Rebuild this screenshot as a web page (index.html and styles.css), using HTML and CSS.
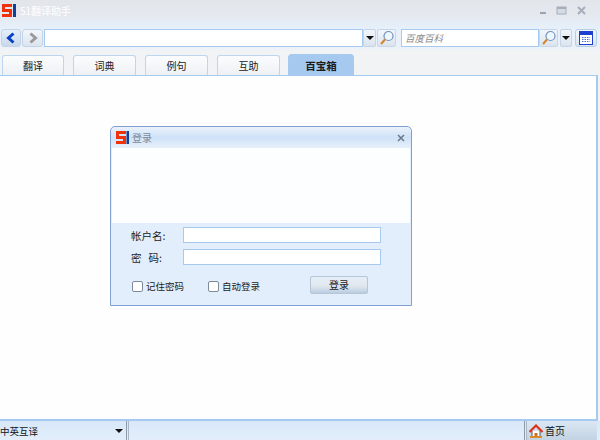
FILE: index.html
```html
<!DOCTYPE html>
<html lang="zh">
<head>
<meta charset="utf-8">
<title>51翻译助手</title>
<link rel="stylesheet" href="styles.css">
</head>
<body>
<div class="app">
  <header class="titlebar">
    <svg class="logo" width="14" height="13" viewBox="0 0 14 13"><path d="M0 0h10v3H3v2h7v8H0v-3h7V8H0z" fill="#f0320c"/><rect x="11" width="3" height="13" fill="#123f9a"/></svg>
    <span class="apptitle">51翻译助手</span>
    <div class="winctl">
      <svg width="60" height="14" viewBox="0 0 60 14"><rect x="0" y="9" width="6" height="2" fill="#9aa5b3"/><rect x="17" y="4" width="9" height="7" fill="#d5dbe3" stroke="#a5aeba"/><rect x="17" y="4" width="9" height="2" fill="#a5aeba"/><path d="M38 4l7 7M45 4l-7 7" stroke="#a5aeba" stroke-width="2"/></svg>
    </div>
  </header>
  <div class="toolbar">
    <button class="navbtn nav-active"><svg width="12" height="12" viewBox="0 0 12 12"><path d="M8.500 1.500L3.500 6l5 4.500" fill="none" stroke="#0a3fc4" stroke-width="3"/></svg></button>
    <button class="navbtn"><svg width="12" height="12" viewBox="0 0 12 12"><path d="M3.500 1.500L8.500 6l-5 4.500" fill="none" stroke="#9a9a9a" stroke-width="3"/></svg></button>
    <div class="field field-main"></div>
    <button class="dropbtn"><i class="caret"></i></button>
    <button class="iconbtn"><svg width="16" height="16" viewBox="0 0 16 16"><circle cx="9.500" cy="6" r="4.500" fill="#eef6ff" stroke="#6f93bb" stroke-width="1.200"/><path d="M6 9.500L2 14" stroke="#d9822b" stroke-width="2"/></svg></button>
    <div class="field field-search"><span class="hint">百度百科</span></div>
    <button class="iconbtn iconbtn-joined"><svg width="16" height="16" viewBox="0 0 16 16"><circle cx="9.500" cy="6" r="4.500" fill="#eef6ff" stroke="#6f93bb" stroke-width="1.200"/><path d="M6 9.500L2 14" stroke="#d9822b" stroke-width="2"/></svg></button>
    <button class="dropbtn dropbtn-gap"><i class="caret"></i></button>
    <button class="calbtn"><svg width="14" height="14" viewBox="0 0 14 14"><rect x=".5" y=".5" width="13" height="13" fill="#fff" stroke="#1c3fd0"/><rect x="1" y="1" width="12" height="3" fill="#1c3fd0"/><path d="M3 6.500h8M3 8.500h8M3 10.500h8" stroke="#4d6fe0" stroke-dasharray="1.500 1"/></svg></button>
  </div>
  <nav class="tabs">
    <span class="tab">翻译</span>
    <span class="tab">词典</span>
    <span class="tab">例句</span>
    <span class="tab">互助</span>
    <span class="tab tab-on">百宝箱</span>
  </nav>
  <main class="content">
    <section class="dialog">
      <div class="dlghead">
        <svg class="dlglogo" width="13" height="13" viewBox="0 0 13 13"><path d="M0 0h10v3H3v2h7v8H0v-3h7V8H0z" fill="#f0320c"/><rect x="10.500" width="2.500" height="13" fill="#123f9a"/></svg>
        <span class="dlgtitle">登录</span>
        <svg class="dlgclose" width="8" height="8" viewBox="0 0 8 8"><path d="M1 1l6 6M7 1L1 7" stroke="#6c7b8b" stroke-width="1.600"/></svg>
      </div>
      <div class="dlgbody"></div>
      <div class="dlgform">
        <div class="row"><label class="lbl">帐户名:</label><div class="txt"></div></div>
        <div class="row"><label class="lbl">密&nbsp;&nbsp;&nbsp;码:</label><div class="txt"></div></div>
        <div class="opts">
          <i class="check"></i><span class="opt opt-a">记住密码</span>
          <i class="check"></i><span class="opt">自动登录</span>
          <button class="login">登录</button>
        </div>
      </div>
    </section>
  </main>
  <footer class="status">
    <div class="lang"><span>中英互译</span><i class="caret"></i></div>
    <div class="mid"></div>
    <div class="home">
      <svg width="14" height="14" viewBox="0 0 14 14"><path d="M3 7v6h8V7" fill="#fff" stroke="#555"/><path d="M.5 8L7 1.500 13.500 8" fill="none" stroke="#e0321a" stroke-width="2.200"/><rect x="5.500" y="9" width="3" height="4" fill="#c9701f"/><rect x="1" y="12" width="12" height="2" fill="#d98a2b"/></svg>
      <span>首页</span>
    </div>
  </footer>
</div>
</body>
</html>
```

FILE: styles.css
```css
* { box-sizing: border-box; }
html, body { margin: 0; padding: 0; }
body { width: 600px; height: 440px; overflow: hidden; font-family: "Noto Sans CJK SC", "Liberation Sans", sans-serif; font-size: 10px; color: #222; }
.app { width: 600px; height: 440px; display: flex; flex-direction: column; background: #f1f3f6; }
.titlebar { height: 28px; flex: none; display: flex; align-items: flex-start; padding: 3px 0 0 2px; background: linear-gradient(#e2e5ea, #e5e9ef 55%, #e6f0fb); }
.logo { flex: none; margin-top: 1px; }
.apptitle { margin-left: 4px; line-height: 15px; font-size: 10px; color: #fff; }
.winctl { margin-left: auto; height: 14px; display: flex; }
.toolbar { height: 23px; flex: none; display: flex; align-items: flex-start; padding: 1px 3px 0 1px; background: linear-gradient(#e6f0fb, #eaf1fa 80%, #f1f3f6); }
.toolbar > * { flex: none; }
button { margin: 0; padding: 0; font: inherit; }
.navbtn { width: 21px; height: 18px; display: flex; align-items: center; justify-content: center; border: 1px solid #c4d4e6; border-radius: 3px; background: linear-gradient(#f2f6fb, #dbe4ee); }
.nav-active { width: 20px; margin-right: 1px; background: linear-gradient(#e6eff9, #c8d8ea); }
.field { height: 18px; border: 1px solid #a6cbee; background: #fff; }
.field-main { width: 319px; margin-left: 1px; }
.dropbtn { width: 13px; height: 18px; display: flex; align-items: center; justify-content: center; border: 1px solid #c4d4e6; border-radius: 2px; background: linear-gradient(#f2f6fb, #dbe4ee); }
.dropbtn-gap { width: 12px; margin-left: 2px; }
.caret { display: block; width: 0; height: 0; border: 4px solid transparent; border-top: 4px solid #111; border-bottom: 0; }
.iconbtn { width: 19px; height: 18px; margin-left: 1px; display: flex; align-items: center; justify-content: center; border: 1px solid #c8d6e6; border-radius: 2px; background: linear-gradient(#f2f6fb, #dbe4ee); }
.iconbtn-joined { margin-left: 0; }
.field-search { width: 138px; margin-left: 5px; padding-left: 3px; line-height: 15px; }
.hint { font-size: 9.500px; font-style: italic; color: #8a8a8a; }
.calbtn { width: 22px; height: 18px; margin-left: 3px; display: flex; align-items: center; justify-content: center; border: 1px solid #b9cde3; border-radius: 3px; background: linear-gradient(#f2f6fb, #d8e4f0); }
.tabs { height: 24px; flex: none; display: flex; align-items: flex-end; padding: 0 0 0 2px; gap: 9px; background: #f1f3f5; }
.tab { width: 62px; height: 20px; display: flex; align-items: center; justify-content: center; font-size: 10px; color: #1a1a1a; border: 1px solid #bcd6ef; border-bottom: 0; border-radius: 3px 3px 0 0; background: linear-gradient(#fbfcfd, #eef1f4); }
.tab + .tab { width: 63px; }
.tab.tab-on { width: 66px; margin-left: -1px; height: 21px; font-size: 10.500px; font-weight: 700; background: #a6c9ef; border-color: #a6c9ef; border-radius: 4px 4px 0 0; }
.content { flex: 1; position: relative; margin-right: 2px; background: #fefefe; border-top: 1px solid #a6c9ef; border-right: 2px solid #a6c9ef; border-bottom: 2px solid #a6c9ef; }
.dialog { position: absolute; left: 110px; top: 50px; width: 302px; height: 180px; display: flex; flex-direction: column; border: 1px solid #7f9fd0; border-top-left-radius: 5px; border-top-right-radius: 5px; background: #e2eefb; }
.dlghead { height: 21px; flex: none; display: flex; align-items: center; padding: 0 6px 0 5px; border-radius: 5px 5px 0 0; background: linear-gradient(#eaf2fb, #cfe2f8 50%, #e6f0fb); }
.dlgtitle { margin-left: 3px; font-size: 10px; color: #7d8a99; }
.dlgclose { margin-left: auto; }
.dlgbody { height: 75px; flex: none; margin: 0 1px; background: #fdfeff; }
.dlgform { flex: 1; padding: 4px 29px 0 20px; }
.row { height: 16px; margin-bottom: 6px; display: flex; align-items: center; }
.lbl { width: 52px; padding-top: 1px; font-size: 10.500px; color: #222; line-height: 16px; white-space: nowrap; }
.txt { width: 198px; height: 16px; border: 1px solid #a6c9ef; background: #fff; }
.opts { display: flex; align-items: flex-start; height: 20px; margin-top: 11px; padding-left: 1px; }
.check { width: 11px; height: 11px; margin-top: 5px; border: 1px solid #7f8a99; border-radius: 2px; background: #fff; }
.opt { margin-left: 3px; line-height: 20px; font-size: 9.500px; color: #222; }
.opt-a { width: 62px; }
.login { width: 58px; height: 18px; margin-left: 50px; font-size: 10px; line-height: 14px; color: #222; border: 1px solid #b5c6d9; border-radius: 2px; background: linear-gradient(#e6eef7, #e0e7ef 55%, #bccde0); }
.status { height: 19px; flex: none; display: flex; background: linear-gradient(#d8e8f9, #e2eefb); }
.lang { width: 127px; display: flex; align-items: center; justify-content: space-between; padding: 0 3px 0 0; border-right: 1px solid #8d99a6; font-size: 9.500px; color: #111; }
.lang span { line-height: 18px; }
.mid { flex: 1; margin-left: 1px; border-left: 1px solid #a9b6c4; border-right: 1px solid #8d99a6; }
.home { width: 71px; margin: 0 3px 0 1px; display: flex; align-items: center; padding-left: 2px; gap: 2px; font-size: 10px; color: #111; border-left: 1px solid #a9b6c4; background: linear-gradient(#dbe7f3, #c3d3e4); }
```
